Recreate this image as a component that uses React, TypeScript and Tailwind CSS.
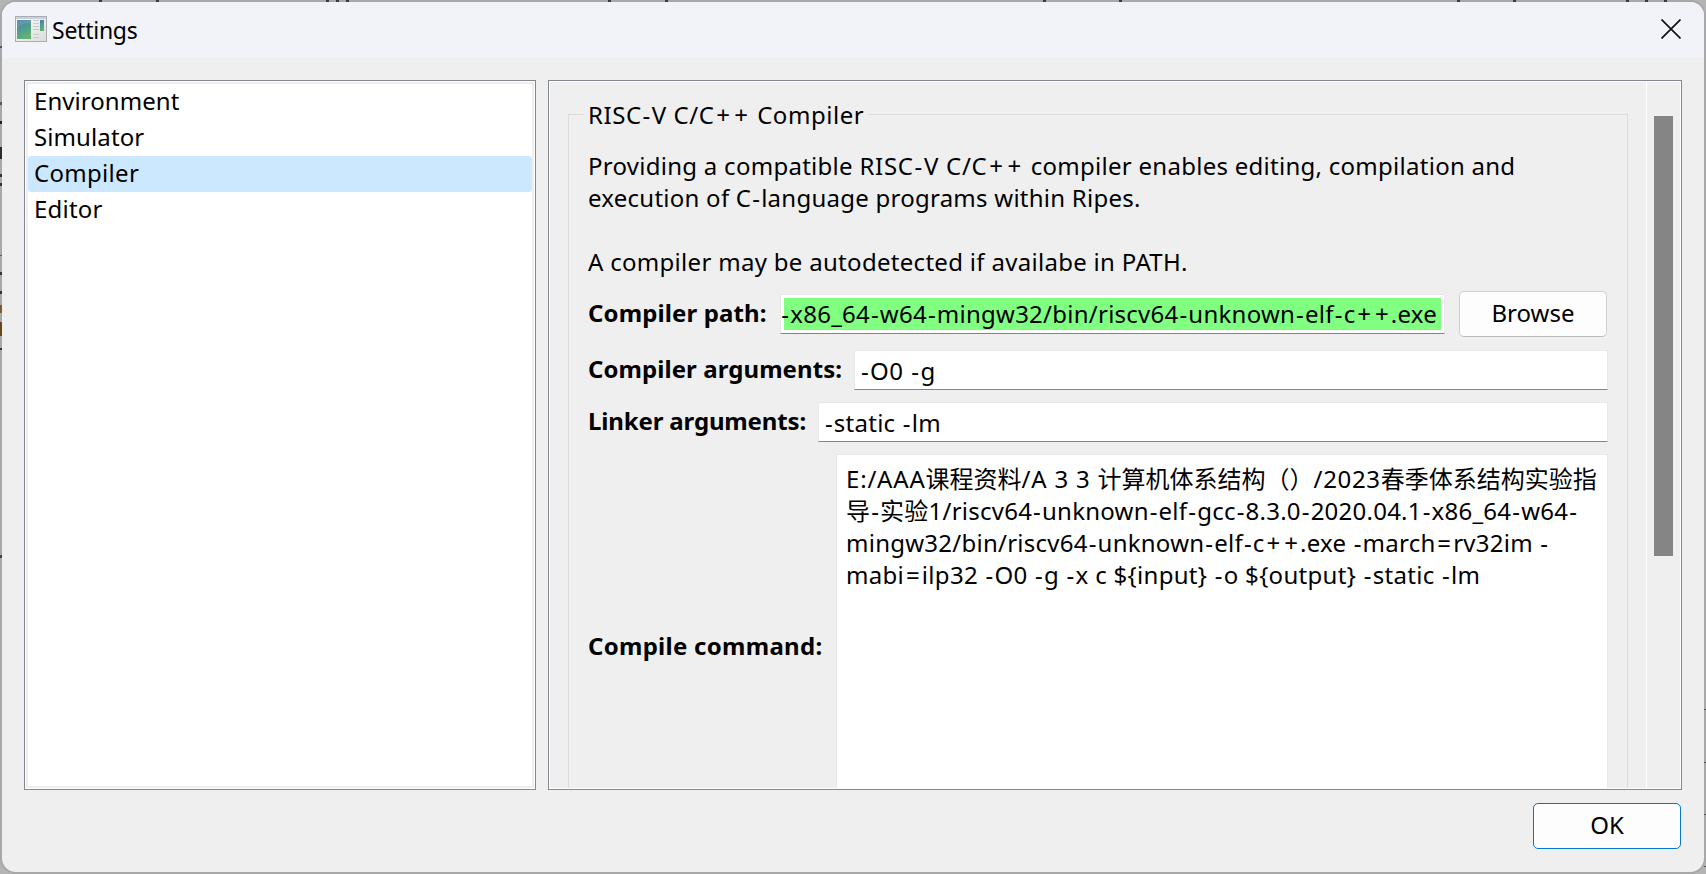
import type { ReactNode } from "react";

const pages = [
  { name: "Environment", tracking: "tracking-[0.05px]" },
  { name: "Simulator", tracking: "tracking-[0.1px]" },
  { name: "Compiler", tracking: "tracking-[0.3px]" },
  { name: "Editor", tracking: "tracking-[0.2px]" },
];

/* Windows content that peeks out around the dialog's frame. */
const leftTicks = [
  { top: 46, height: 2, color: "#555555" },
  { top: 102, height: 3, color: "#555555" },
  { top: 121, height: 3, color: "#222222" },
  { top: 147, height: 12, color: "#2b2b2b" },
  { top: 174, height: 3, color: "#333333" },
  { top: 183, height: 3, color: "#333333" },
  { top: 255, height: 1, color: "#33668c" },
  { top: 272, height: 3, color: "#333333" },
  { top: 291, height: 3, color: "#333333" },
  { top: 305, height: 8, color: "#7a5a30" },
  { top: 322, height: 14, color: "#6b451b" },
  { top: 348, height: 2, color: "#333333" },
  { top: 555, height: 3, color: "#444444" },
];
const topTicks = [99, 156, 326, 336, 346, 608, 665, 1043, 1119, 1457, 1513, 1626, 1645, 1664];
const rightTicks = [709, 762, 814, 866];

/* Widens the signs that Segoe-style text sets broader than Noto Sans does. */
function Text({ children, className = "" }: { children: string; className?: string }) {
  return (
    <span className={`whitespace-pre ${className}`}>
      {children.split(/([-+=])/).map((part, i) => {
        if (part === "-") return <span key={i} className="mx-[0.95px]">-</span>;
        if (part === "+" || part === "=") return <span key={i} className="mx-[1.85px]">{part}</span>;
        return part;
      })}
    </span>
  );
}

function Label({ children, className }: { children: string; className: string }) {
  return <div className={`shrink-0 font-bold ${className}`}>{children}</div>;
}

function Field({ children, className = "" }: { children: ReactNode; className?: string }) {
  return (
    <div className={`flex h-[40px] min-w-0 flex-1 border border-[#e9e9e9] border-b-[#858585] bg-white ${className}`}>
      {children}
    </div>
  );
}

function AppIcon() {
  return (
    <svg width="32" height="26" viewBox="0 0 32 26">
      <defs>
        <linearGradient id="pane" x1="0" y1="0" x2="0.4" y2="1">
          <stop offset="0" stopColor="#4779ad" />
          <stop offset="0.5" stopColor="#4f9a94" />
          <stop offset="1" stopColor="#63b072" />
        </linearGradient>
        <linearGradient id="frame" x1="0" y1="0" x2="1" y2="1">
          <stop offset="0" stopColor="#fdfdfd" />
          <stop offset="1" stopColor="#dcdcdc" />
        </linearGradient>
      </defs>
      <rect x="0.5" y="0.5" width="31" height="25" fill="url(#frame)" stroke="#a9aeb5" />
      <rect x="1" y="1" width="30" height="2" fill="#c9d0dc" />
      <rect x="2" y="4" width="14" height="19" fill="url(#pane)" />
      <path d="M2 12C6 8 11 7 16 7V4H2Z" fill="#ffffff" opacity="0.12" />
      <path d="M18 4.5h6M18 7.5h6M18 10.5h6M18 13.5h6M18 18.5h6M18 21.5h6" stroke="#c9c9c9" />
      <rect x="25" y="4" width="4" height="11" fill="url(#pane)" />
    </svg>
  );
}

export default function App() {
  return (
    <div className="relative h-[874px] w-[1706px] overflow-hidden bg-[#b4b4b4] p-[2px] font-['Noto_Sans','Noto_Sans_CJK_SC',sans-serif] text-[24px] leading-[32px] text-black">
      {leftTicks.map((t) => (
        <div key={t.top} className="absolute left-0 z-10 w-[2px]" style={{ top: t.top, height: t.height, background: t.color }} />
      ))}
      {topTicks.map((x) => (
        <div key={x} className="absolute top-0 z-10 h-[2px] w-[3px] bg-[#3a3a3a]" style={{ left: x }} />
      ))}
      {rightTicks.map((y) => (
        <div key={y} className="absolute right-0 z-10 h-px w-[2px] bg-[#555555]" style={{ top: y }} />
      ))}

      <div className="relative flex h-[870px] flex-col overflow-hidden rounded-[14px] bg-[#efefef] shadow-[0_0_0_2px_#a8a8a8]">
        <header className="flex h-[56px] shrink-0 items-start bg-[#f1f3f9] pl-[13px] pr-[23px]">
          <div className="mt-[14px]">
            <AppIcon />
          </div>
          <h1 className="ml-[5px] mt-[12px] text-[23px] tracking-[-0.25px]">Settings</h1>
          <svg className="ml-auto mt-[17px]" width="20" height="20" viewBox="0 0 20 20">
            <path d="M0.5 0.5L19.5 19.5M19.5 0.5L0.5 19.5" stroke="#111111" strokeWidth="1.7" />
          </svg>
        </header>

        <main className="flex gap-[12px] pl-[22px] pr-[22px] pt-[22px]">
          <nav className="h-[710px] w-[512px] border border-[#828790] bg-white p-px">
            <div className="h-full border-2 border-[#efefef]">
              {pages.map((p) => (
                <div
                  key={p.name}
                  className={`h-[36px] pl-[6px] pt-px ${p.tracking} ${p.name === "Compiler" ? "rounded-[3px] bg-[#cce8ff]" : ""}`}
                >
                  {p.name}
                </div>
              ))}
            </div>
          </nav>

          <section className="flex h-[710px] w-[1134px] border border-[#828790]">
            <div className="flex w-full border border-white">
              <div className="flex-1 overflow-hidden pl-[18px] pr-[18px] pt-[17px]">
                <div className="flex h-[32px]">
                  <div className="mt-[15px] w-[16px] border-l border-t border-[#dcdcdc]" />
                  <Text className="w-[284px] pl-[4px] tracking-[0.55px]">RISC-V C/C++ Compiler</Text>
                  <div className="mt-[15px] flex-1 border-r border-t border-[#dcdcdc]" />
                </div>

                <div className="h-[760px] border-x border-[#dcdcdc] pl-[19px] pr-[19px] pt-[19px]">
                  <p className="flex flex-col">
                    <span className="flex">
                      <Text className="tracking-[0.27px]">{"Providing a compatible "}</Text>
                      <Text className="tracking-[0.72px]">{"RISC-V C/C++ "}</Text>
                      <Text className="tracking-[0.27px]">compiler enables editing, compilation and</Text>
                    </span>
                    <Text className="tracking-[0.25px]">execution of C-language programs within Ripes.</Text>
                    <Text className="mt-[32px] tracking-[0.3px]">
                      A compiler may be autodetected if availabe in PATH.
                    </Text>
                  </p>

                  <div className="mt-[13px] flex h-[46px]">
                    <Label className="mt-[6px] w-[192px] tracking-[0.12px]">Compiler path:</Label>
                    <Field className="mt-[3px] overflow-hidden p-[3px]">
                      <div className="flex w-full justify-end bg-[#80ff80] pr-[4px]">
                        <Text className="tracking-[0.25px]">
                          -x86_64-w64-mingw32/bin/riscv64-unknown-elf-c++.exe
                        </Text>
                      </div>
                    </Field>
                    <button className="ml-[14px] mr-px h-[46px] w-[148px] rounded-[5px] border border-[#d0d0d0] border-b-[#bcbcbc] bg-[#fdfdfd] pb-[2px]">
                      Browse
                    </button>
                  </div>

                  <div className="mt-[13px] flex">
                    <Label className="mt-[3px] w-[266px] tracking-[0.07px]">Compiler arguments:</Label>
                    <Field className="pl-[5px] pt-[4px]">
                      <Text className="tracking-[0.5px]">-O0 -g</Text>
                    </Field>
                  </div>

                  <div className="mt-[12px] flex">
                    <Label className="mt-[3px] w-[230px] tracking-[-0.15px]">Linker arguments:</Label>
                    <Field className="pl-[5px] pt-[4px]">
                      <Text className="tracking-[0.25px]">-static -lm</Text>
                    </Field>
                  </div>

                  <div className="mt-[12px] flex h-[384px] items-center">
                    <Label className="w-[248px] tracking-[0.28px]">Compile command:</Label>
                    <div className="flex h-full flex-1 flex-col border border-[#e9e9e9] bg-white pl-[9px] pt-[8px]">
                      <div className="whitespace-pre">
                        <span className="tracking-[0.8px]">E:/AAA</span>课程资料<span className="tracking-[0.8px]">/A 3 3 </span>
                        计算机体系结构（）<span className="tracking-[0.65px]">/2023</span>春季体系结构实验指
                      </div>
                      <Text className="tracking-[0.24px]">
                        导-实验1/riscv64-unknown-elf-gcc-8.3.0-2020.04.1-x86_64-w64-
                      </Text>
                      <Text className="tracking-[0.25px]">mingw32/bin/riscv64-unknown-elf-c++.exe -march=rv32im -</Text>
                      <Text className="tracking-[0.31px]">{"mabi=ilp32 -O0 -g -x c ${input} -o ${output} -static -lm"}</Text>
                    </div>
                  </div>
                </div>
              </div>

              <div className="w-[34px] border-l border-white pl-[7px] pt-[34px]">
                <div className="h-[440px] w-[19px] bg-[#858585]" />
              </div>
            </div>
          </section>
        </main>

        <footer className="mt-[13px] flex justify-end pr-[23px]">
          <button className="h-[46px] w-[148px] rounded-[5px] border border-[#0078d4] bg-[#fdfdfd] pb-[2px]">OK</button>
        </footer>
      </div>
    </div>
  );
}
